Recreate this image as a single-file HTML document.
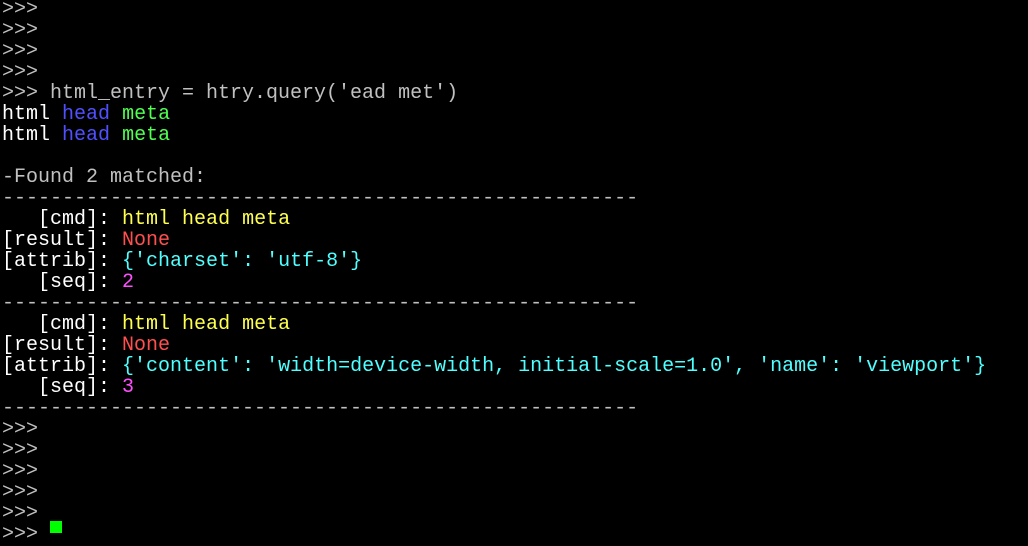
<!DOCTYPE html>
<html><head><style>
html,body{margin:0;background:#000;width:1028px;height:533px;overflow:hidden}
pre{margin:0;position:absolute;top:-1px;left:2px;font-family:"Liberation Mono",monospace;font-size:20px;line-height:21px;color:#c0c0c0;white-space:pre}
.w{color:#fff}.b{color:#5050ff}.g{color:#50ff50}.y{color:#ffff50}.r{color:#ff5050}.c{color:#50ffff}.m{color:#ff50ff}
.cur{position:absolute;left:50px;top:521px;width:12px;height:12px;background:#00ff00}
</style></head><body>
<pre>&gt;&gt;&gt;
&gt;&gt;&gt;
&gt;&gt;&gt;
&gt;&gt;&gt;
&gt;&gt;&gt; html_entry = htry.query('ead met')
<span class="w">html</span> <span class="b">head</span> <span class="g">meta</span>
<span class="w">html</span> <span class="b">head</span> <span class="g">meta</span>

-Found 2 matched:
-----------------------------------------------------
   <span class="w">[cmd]:</span> <span class="y">html head meta</span>
<span class="w">[result]:</span> <span class="r">None</span>
<span class="w">[attrib]:</span> <span class="c">{'charset': 'utf-8'}</span>
   <span class="w">[seq]:</span> <span class="m">2</span>
-----------------------------------------------------
   <span class="w">[cmd]:</span> <span class="y">html head meta</span>
<span class="w">[result]:</span> <span class="r">None</span>
<span class="w">[attrib]:</span> <span class="c">{'content': 'width=device-width, initial-scale=1.0', 'name': 'viewport'}</span>
   <span class="w">[seq]:</span> <span class="m">3</span>
-----------------------------------------------------
&gt;&gt;&gt;
&gt;&gt;&gt;
&gt;&gt;&gt;
&gt;&gt;&gt;
&gt;&gt;&gt;
&gt;&gt;&gt;</pre>
<div class="cur"></div>
</body></html>
